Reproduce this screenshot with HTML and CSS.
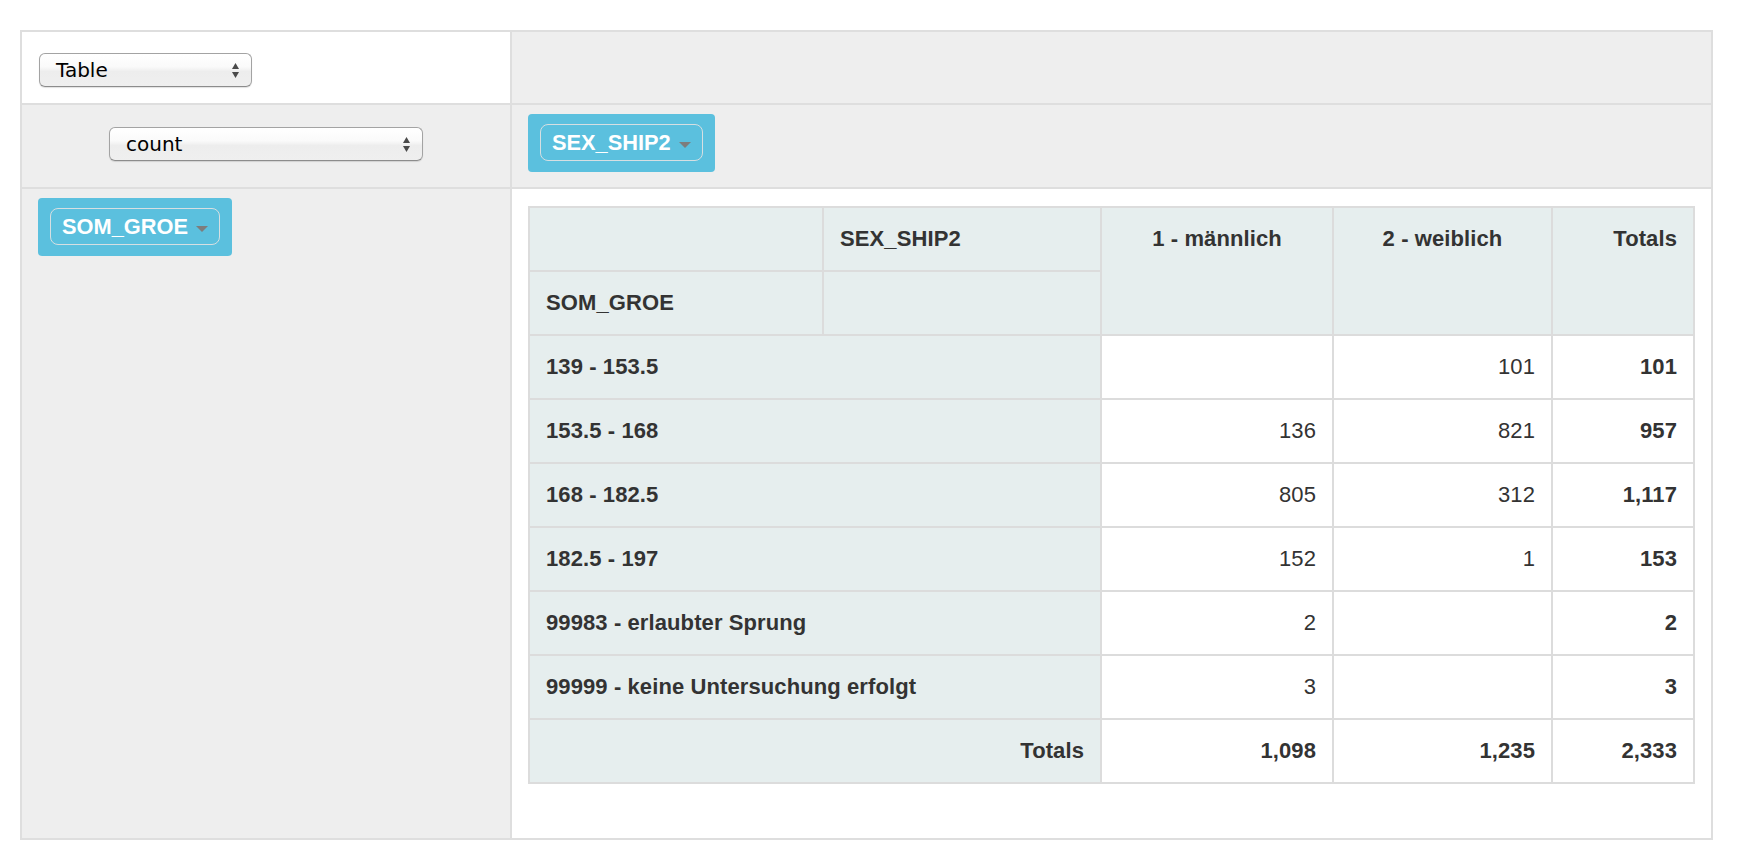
FILE: index.html
```html
<!DOCTYPE html>
<html lang="de">
<head>
<meta charset="utf-8">
<title>Pivot</title>
<link rel="stylesheet" href="styles.css">
</head>
<body>
<div class="pvt-ui">
  <div class="cell renderer-cell">
    <div class="select select-renderer">
      <span>Table</span>
      <svg class="arrows" width="7" height="15" viewBox="0 0 7 15"><polygon points="0,6 3.5,0 7,6"/><polygon points="0,9 3.5,15 7,9"/></svg>
    </div>
  </div>
  <div class="cell unused-cell"></div>
  <div class="cell vals-cell">
    <div class="select select-agg">
      <span>count</span>
      <svg class="arrows" width="7" height="15" viewBox="0 0 7 15"><polygon points="0,6 3.5,0 7,6"/><polygon points="0,9 3.5,15 7,9"/></svg>
    </div>
  </div>
  <div class="cell axis-cell">
    <div class="pill"><span class="pill-inner">SEX_SHIP2<i class="caret"></i></span></div>
  </div>
  <div class="cell axis-cell">
    <div class="pill"><span class="pill-inner">SOM_GROE<i class="caret"></i></span></div>
  </div>
  <div class="cell output-cell">
    <table class="pvt-table">
      <colgroup><col class="w1"><col class="w2"><col class="w3"><col class="w4"><col class="w5"></colgroup>
      <thead>
        <tr>
          <th></th>
          <th>SEX_SHIP2</th>
          <th class="col-label" rowspan="2">1 - männlich</th>
          <th class="col-label" rowspan="2">2 - weiblich</th>
          <th class="total-label" rowspan="2">Totals</th>
        </tr>
        <tr>
          <th>SOM_GROE</th>
          <th></th>
        </tr>
      </thead>
      <tbody>
        <tr><th colspan="2">139 - 153.5</th><td></td><td>101</td><td class="total">101</td></tr>
        <tr><th colspan="2">153.5 - 168</th><td>136</td><td>821</td><td class="total">957</td></tr>
        <tr><th colspan="2">168 - 182.5</th><td>805</td><td>312</td><td class="total">1,117</td></tr>
        <tr><th colspan="2">182.5 - 197</th><td>152</td><td>1</td><td class="total">153</td></tr>
        <tr><th colspan="2">99983 - erlaubter Sprung</th><td>2</td><td></td><td class="total">2</td></tr>
        <tr><th colspan="2">99999 - keine Untersuchung erfolgt</th><td>3</td><td></td><td class="total">3</td></tr>
        <tr><th class="total-label" colspan="2">Totals</th><td class="total">1,098</td><td class="total">1,235</td><td class="total">2,333</td></tr>
      </tbody>
    </table>
  </div>
</div>
</body>
</html>
```

FILE: styles.css
```css
* { box-sizing: border-box; }
html, body { margin: 0; background: #fff; }
body { font-family: "Liberation Sans", Arial, sans-serif; color: #333; }

.pvt-ui {
  display: grid;
  grid-template-columns: 488px 1199px;
  grid-template-rows: 71px 82px 649px;
  gap: 2px;
  padding: 2px;
  width: 1693px;
  margin: 30px 0 0 20px;
  background: #dedede;
}
.cell { background: #eee; }
.renderer-cell { background: #fff; padding: 21px 0 0 17px; }
.vals-cell { display: flex; justify-content: center; align-items: flex-start; padding-top: 22px; }
.axis-cell { display: flex; align-items: flex-start; padding: 9px 16px; }
.output-cell { background: #fff; padding: 17px 16px; }

.select {
  display: flex;
  align-items: center;
  justify-content: space-between;
  height: 34px;
  padding: 0 12px 0 16px;
  border: 1px solid #a3a3a3;
  border-bottom-color: #8c8c8c;
  border-radius: 6px;
  background: linear-gradient(to bottom, #ffffff 0%, #fafafa 40%, #ededed 55%, #efefef 100%);
  box-shadow: 0 1px 1px rgba(0, 0, 0, 0.12);
  font-family: "DejaVu Sans", sans-serif;
  font-size: 20px;
  color: #000;
}
.select-renderer { width: 213px; }
.select-agg { width: 314px; }
.arrows { fill: #4a4a4a; display: block; }

.pill {
  background: #5bc0de;
  border-radius: 4px;
  padding: 10px 12px 11px;
}
.pill-inner {
  display: flex;
  align-items: center;
  height: 37px;
  padding: 0 11px;
  border: 1px solid #d6dfe2;
  border-radius: 8px;
  color: #fff;
  font-weight: bold;
  font-size: 21.8px;
  white-space: nowrap;
}
.caret {
  width: 0;
  height: 0;
  margin: 5px 0 0 8px;
  border-left: 6px solid transparent;
  border-right: 6px solid transparent;
  border-top: 6px solid #7d7d7d;
}

.pvt-table {
  border-collapse: separate;
  border-spacing: 0;
  table-layout: fixed;
  width: 1167px;
  border-top: 2px solid #dcdcdc;
  border-left: 2px solid #dcdcdc;
  font-size: 22px;
  letter-spacing: 0.1px;
  line-height: 30px;
  color: #333;
}
.w1 { width: 294px; }
.w2 { width: 278px; }
.w3 { width: 232px; }
.w4 { width: 219px; }
.w5 { width: 142px; }
.pvt-table th,
.pvt-table td {
  padding: 16px 16px 16px;
  border-right: 2px solid #dcdcdc;
  border-bottom: 2px solid #dcdcdc;
  vertical-align: top;
  white-space: nowrap;
}
.pvt-table th {
  background: #e6eeee;
  font-weight: bold;
  text-align: left;
}
.pvt-table td { background: #fff; text-align: right; font-weight: normal; }
.pvt-table td.total { font-weight: bold; }
.pvt-table th.col-label { text-align: center; }
.pvt-table th.total-label { text-align: right; }
```
